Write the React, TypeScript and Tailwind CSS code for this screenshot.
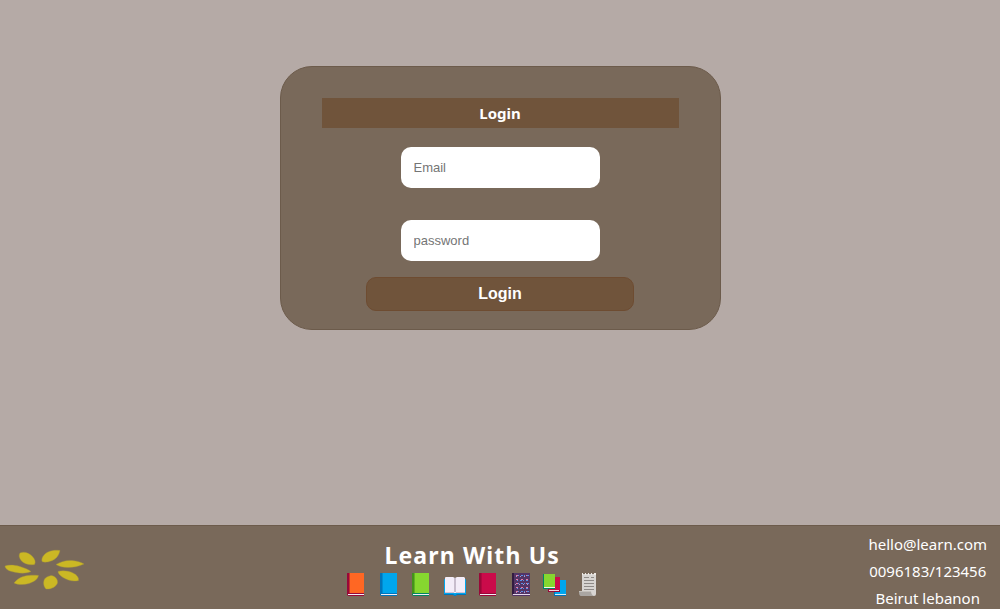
import React from "react";

function FlowerLogo() {
  return (
    <svg width="80" height="42" viewBox="4 549 80 42" fill="#cbb824" stroke="#a6953a" strokeWidth=".4" aria-label="Learn With Us logo" role="img">
      <path d="M20 553C24 551 29 553 32 556C35 559 36 562 34.500 564.500C29 565.500 24 563.500 21.500 561C19 558 18.500 555 20 553Z" />
      <path d="M42 561.500C41 558 44 554 48 552C52 550 56 550 60 550.500C58.500 557 55 559.500 51 561C47 562.500 44 562.500 42 561.500Z" />
      <path d="M56 564.500C62 561 67 560 72 560.500C77 561 81 562 84 564C79 566.500 73 567.500 68 567.500C63 567.500 59 566.500 56 564.500Z" />
      <path d="M58 571.500C63 570 69 571 73 573C77 575 79 577.500 78.500 580.500C73 582 67 580 63 577.500C60 575.500 58 573.500 58 571.500Z" />
      <path d="M51 575.500C55 576 58 579 57.500 583C56 587 51 589.500 46 589C43 586 43 581 45 578.500C47 576.500 49 576 51 575.500Z" />
      <path d="M14 583C18 578 23 576 28 575.500C32 575 36 575 38.500 575.500C38 579 34 582 29 583.500C24 585 18 585 14 583Z" />
      <path d="M5 566C9 564.500 15 565 20 566.500C25 568 28 569.500 31 571.500C27 573.500 21 573.500 16 572.500C10 571.500 5 569.500 5 566Z" />
    </svg>
  );
}

function ClosedBook({ cover, spine, base }: { cover: string; spine: string; base: string }) {
  return (
    <svg width="22" height="24" viewBox="0 0 22 24" aria-hidden="true">
      <path d="M3 1H19V24H4Q2 24 2 22V2Q2 1 3 1Z" fill={base} />
      <path d="M3 22H19V23H3Z" fill="#f3edf5" />
      <path d="M2 2Q2 1 3 1H5V21H3L2 22Z" fill={spine} />
      <path d="M4 1H19V21H4Z" fill={cover} />
      <path d="M4 1H5V21H4Z" fill={spine} opacity=".55" />
    </svg>
  );
}

function OpenBook() {
  return (
    <svg width="24" height="24" viewBox="0 0 24 24" aria-hidden="true">
      <path d="M2 7H22Q23 7 23 8V23H14L12 24L10 23H1V8Q1 7 2 7Z" fill="#00a6ed" />
      <path d="M1 22H10L12 23L14 22H23V23H14L12 24L10 23H1Z" fill="#0074ba" />
      <path d="M2 6Q2 5 3 5H10L12 6L14 5H21L22 6V21H2Z" fill="#f3edf8" />
      <path d="M12 6V20" stroke="#9b8da1" />
      <path d="M2 20.500H11M13 20.500H22" stroke="#cfc1d5" />
    </svg>
  );
}

function Notebook() {
  return (
    <svg width="22" height="24" viewBox="0 0 22 24" aria-hidden="true">
      <path d="M2 1H20V24H3Q2 24 2 22Z" fill="#533566" />
      <path d="M2 1H4V22H2Z" fill="#321b41" />
      <path d="M3 22.500H20" stroke="#e6d9ec" />
      <path d="M6 3.500H18M6 7.500H18M6 11.500H18M6 15.500H18M6 19.500H18" stroke="#e27aa8" strokeDasharray="2 3" />
      <path d="M8 3.500H19M7 8.500H18M8 11.500H19M7 16.500H18M8 19.500H19" stroke="#5a92e8" strokeDasharray="1 2 2 1" />
      <path d="M6 4.500H18M5 12.500H18M6 20.500H18" stroke="#b09bc4" strokeDasharray="1 3" />
    </svg>
  );
}

function BookStack() {
  return (
    <svg width="24" height="24" viewBox="0 0 24 24" aria-hidden="true">
      <path d="M12 8H24V24H12Z" fill="#0074ba" />
      <path d="M13 8H24V22H13Z" fill="#00a6ed" />
      <path d="M13 22.500H24" stroke="#d8eef8" />
      <path d="M6 5H18V20H6Z" fill="#990838" />
      <path d="M7 5H18V18H7Z" fill="#ca0b4a" />
      <path d="M7 18.500H17" stroke="#f1d8df" />
      <path d="M1 2H13V17H1Z" fill="#008463" />
      <path d="M2 2H13V15H2Z" fill="#86d72f" />
      <path d="M2 15.500H13" stroke="#f1f7ed" />
    </svg>
  );
}

function Scroll() {
  return (
    <svg width="22" height="24" viewBox="0 0 22 24" aria-hidden="true">
      <path d="M5 2H19V22Q19 24 17 24H5Z" fill="#d8d5d2" />
      <path d="M5 1H6V3H5ZM8 1H9V3H8ZM11 1H12V3H11ZM14 1H15V3H14ZM17 1H19V3H17Z" fill="#eeeae6" />
      <path d="M7 5.500H12M7 8.500H17M7 11.500H17M7 14.500H17M7 17.500H17M14 5.500H17" stroke="#8e8a87" />
      <path d="M2 19H14Q14 23 17 24H4Q2 24 2 20Z" fill="#aaa6a2" />
      <path d="M2 19H14V20H2Z" fill="#c4c0bb" />
    </svg>
  );
}

export default function App() {
  return (
    <div className="flex min-h-screen flex-col bg-[#b5aaa6] font-['Noto_Sans',sans-serif] text-white">
      <main className="flex flex-1 items-start justify-center pt-[66px]">
        <form
          onSubmit={(event) => event.preventDefault()}
          className="flex w-full max-w-[441px] flex-col items-center rounded-[32px] border border-[#6c5b4b] bg-[#79695a] px-[41px] pt-[31px] pb-[18px]"
        >
          <h1 className="h-[30px] w-full bg-[#70543b] text-center text-[15px] leading-[30px] font-bold">Login</h1>
          <input
            type="email"
            aria-label="Email"
            placeholder="Email"
            className="mt-[19px] h-[41px] w-[199px] rounded-[10px] bg-white px-[13px] font-['Liberation_Sans',sans-serif] text-[13px] text-black placeholder:text-[#757575]"
          />
          <input
            type="password"
            aria-label="Password"
            placeholder="password"
            className="mt-8 h-[41px] w-[199px] rounded-[10px] bg-white px-[13px] font-['Liberation_Sans',sans-serif] text-[13px] text-black placeholder:text-[#757575]"
          />
          <button
            type="submit"
            className="mt-4 h-[34px] w-3/4 rounded-[10px] border border-[#6e4c31] bg-[#70543b] font-['Liberation_Sans',sans-serif] text-base font-bold"
          >
            Login
          </button>
        </form>
      </main>
      <footer className="flex h-[84px] justify-between overflow-hidden border-t border-[#6c5b4b] bg-[#79695a]">
        <div className="flex items-center pt-1 pl-1">
          <FlowerLogo />
        </div>
        <div className="flex flex-col items-center pt-3">
          <h2 className="text-[23px] leading-[34px] font-bold tracking-wider">Learn With Us</h2>
          <div className="flex w-[264px] items-center justify-around">
            <ClosedBook cover="#ff6723" spine="#990838" base="#990838" />
            <ClosedBook cover="#00a6ed" spine="#0074ba" base="#0074ba" />
            <ClosedBook cover="#86d72f" spine="#44911b" base="#008463" />
            <OpenBook />
            <ClosedBook cover="#ca0b4a" spine="#990838" base="#990838" />
            <Notebook />
            <BookStack />
            <Scroll />
          </div>
        </div>
        <address className="flex flex-col items-center pt-[5px] pr-[13px] pl-2 text-[15px] leading-[27px] not-italic">
          <a href="mailto:hello@learn.com">hello@learn.com</a>
          <a href="tel:0096183123456">0096183/123456</a>
          <span>Beirut lebanon</span>
        </address>
      </footer>
    </div>
  );
}
